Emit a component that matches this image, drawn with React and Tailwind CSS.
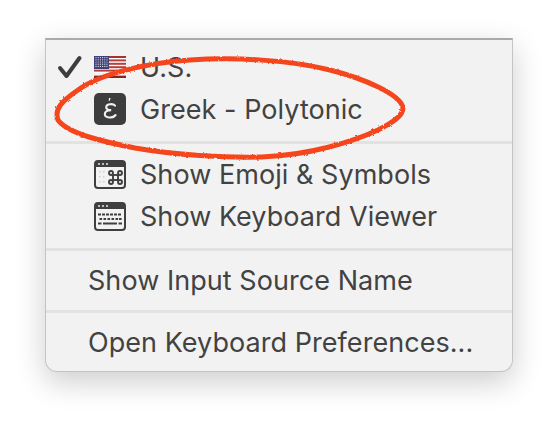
import React from 'react'

const font = { fontFamily: 'Inter' }

const Flag = () => (
  <svg width="32" height="22" viewBox="0 0 32 22" className="block">
    <rect width="32" height="22" fill="#fff" />
    <rect y="0" width="32" height="2" fill="#a8322d" />
    <rect y="3.4" width="32" height="2" fill="#b5403a" />
    <rect y="6.8" width="32" height="2" fill="#b5403a" />
    <rect y="10.2" width="32" height="2" fill="#b5403a" />
    <rect y="13.6" width="32" height="2" fill="#b5403a" />
    <rect y="17" width="32" height="1.8" fill="#f2f2f2" />
    <rect y="19.6" width="32" height="2.4" fill="#8a2420" />
    <rect width="15" height="13" fill="#3f4278" />
    {[1.6, 3.8, 6, 8.2, 10.4].map((y) =>
      [2, 4.2, 6.4, 8.6, 10.8, 13].map((x) => (
        <circle key={x + '-' + y} cx={x} cy={y} r="0.6" fill="#e4e4ee" />
      ))
    )}
  </svg>
)

const GreekIcon = () => (
  <div className="w-8 h-8 rounded-[5px] bg-[#3d3d3d] flex items-center justify-center">
    <svg width="32" height="32" viewBox="0 0 32 32">
      <path d="M15 5 l1.6 0 l-0.7 2.8 l-1.2 0 z" fill="#f0f0f0" />
      <path
        d="M21 12.6 C19.4 10.6 12.6 10.4 12.2 14 C12 16.2 14.4 17.1 17.2 17.1 C13.6 17.1 10.6 18.4 10.8 21.2 C11.1 25.2 18.8 25.6 21.6 22"
        fill="none"
        stroke="#f0f0f0"
        strokeWidth="2.1"
        strokeLinecap="round"
      />
    </svg>
  </div>
)

const WindowFrame = ({ children }) => (
  <svg width="32" height="29" viewBox="0 0 32 29" className="block">
    <rect x="1" y="1" width="30" height="27" rx="3" fill="#f2f2f2" stroke="#3f3f3f" strokeWidth="2" />
    <path d="M1 4 a3 3 0 0 1 3 -3 h24 a3 3 0 0 1 3 3 v3 h-30 z" fill="#3f3f3f" />
    <circle cx="5" cy="4" r="1" fill="#e8e8e8" />
    <circle cx="9" cy="4" r="1" fill="#e8e8e8" />
    <circle cx="13" cy="4" r="1" fill="#e8e8e8" />
    {children}
  </svg>
)

const EmojiIcon = () => (
  <WindowFrame>
    <g fill="#cfcfcf">
      <rect x="5" y="11" width="1.5" height="1.5" />
      <rect x="9" y="11" width="1.5" height="1.5" />
      <rect x="5" y="16" width="1.5" height="1.5" />
      <rect x="9" y="16" width="1.5" height="1.5" />
      <rect x="5" y="21" width="1.5" height="1.5" />
      <rect x="9" y="21" width="1.5" height="1.5" />
    </g>
    <g fill="none" stroke="#3f3f3f" strokeWidth="1.9">
      <rect x="19" y="15" width="5" height="5" />
      <circle cx="17" cy="13" r="2" />
      <circle cx="26" cy="13" r="2" />
      <circle cx="17" cy="22" r="2" />
      <circle cx="26" cy="22" r="2" />
    </g>
  </WindowFrame>
)

const KeyboardIcon = () => (
  <WindowFrame>
    <g fill="#3f3f3f">
      {[4, 8, 12, 16, 20, 24].map((x) => (
        <rect key={x} x={x} y="11.5" width="3" height="2" />
      ))}
      {[5.5, 9.5, 13.5, 17.5, 21.5, 25].map((x) => (
        <rect key={x} x={x} y="16" width="2.6" height="2" />
      ))}
      <rect x="4" y="20.5" width="3.5" height="2" />
      <rect x="9" y="20.5" width="14" height="2" />
      <rect x="24.5" y="20.5" width="3.5" height="2" />
    </g>
  </WindowFrame>
)

const Row = ({ icon, check, children }) => (
  <div className="h-[42px] flex items-center">
    {icon ? (
      <>
        <div className="w-[47px] flex justify-center">{check}</div>
        <div className="w-[47px] pl-[1px]">{icon}</div>
      </>
    ) : (
      <div className="w-[42px]" />
    )}
    <span className="text-[27px] leading-none tracking-[0.05px] text-[#424242] whitespace-nowrap">{children}</span>
  </div>
)

const Separator = () => <div className="h-[3px] bg-[#e2e2e2]" />

const App = () => {
  return (
    <div className="w-[558px] h-[424px] bg-white pt-[38px] pl-[45px] relative overflow-hidden" style={font}>
      <div className="w-[468px] h-[334px] rounded-b-[12px] bg-[#f2f2f2] border border-[#c4c4c4] border-t-2 border-t-[#aaaaaa] shadow-[0_10px_30px_rgba(0,0,0,0.2)] pt-[6px]">
        <Row
          icon={<Flag />}
          check={
            <svg width="26" height="24" viewBox="0 0 26 24">
              <path d="M3 13 L9.5 21 L22.5 3" fill="none" stroke="#3d3d3d" strokeWidth="4" strokeLinecap="round" strokeLinejoin="round" />
            </svg>
          }
        >
          U.S.
        </Row>
        <Row icon={<GreekIcon />}>Greek - Polytonic</Row>
        <div className="mt-[11px] mb-[9px]"><Separator /></div>
        <Row icon={<EmojiIcon />}>Show Emoji &amp; Symbols</Row>
        <Row icon={<KeyboardIcon />}>Show Keyboard Viewer</Row>
        <div className="mt-[11px] mb-[8px]"><Separator /></div>
        <Row>Show Input Source Name</Row>
        <div className="mt-[9px] mb-[8px]"><Separator /></div>
        <Row>Open Keyboard Preferences...</Row>
      </div>

      {/* hand drawn annotation over the menu */}
      <svg width="558" height="424" viewBox="0 0 558 424" className="absolute left-0 top-0 pointer-events-none">
        <defs>
          <filter id="rough" x="-5%" y="-10%" width="110%" height="120%">
            <feTurbulence type="fractalNoise" baseFrequency="0.35" numOctaves="2" seed="4" />
            <feDisplacementMap in="SourceGraphic" scale="2.5" />
            <feGaussianBlur stdDeviation="0.3" />
          </filter>
        </defs>
        <path
          d="M403 108 C401 94 362 78 330 70 C290 60 235 57 190 60 C145 63 100 74 78 90 C62 101 54 109 58 120 C68 134 105 142 135 148 C175 155 225 158 262 157 C310 155 352 142 378 130 C392 123 403 116 403 108 Z"
          fill="none"
          stroke="#f5451e"
          strokeWidth="5"
          strokeLinecap="round"
          filter="url(#rough)"
        />
      </svg>
    </div>
  )
}

export default App
